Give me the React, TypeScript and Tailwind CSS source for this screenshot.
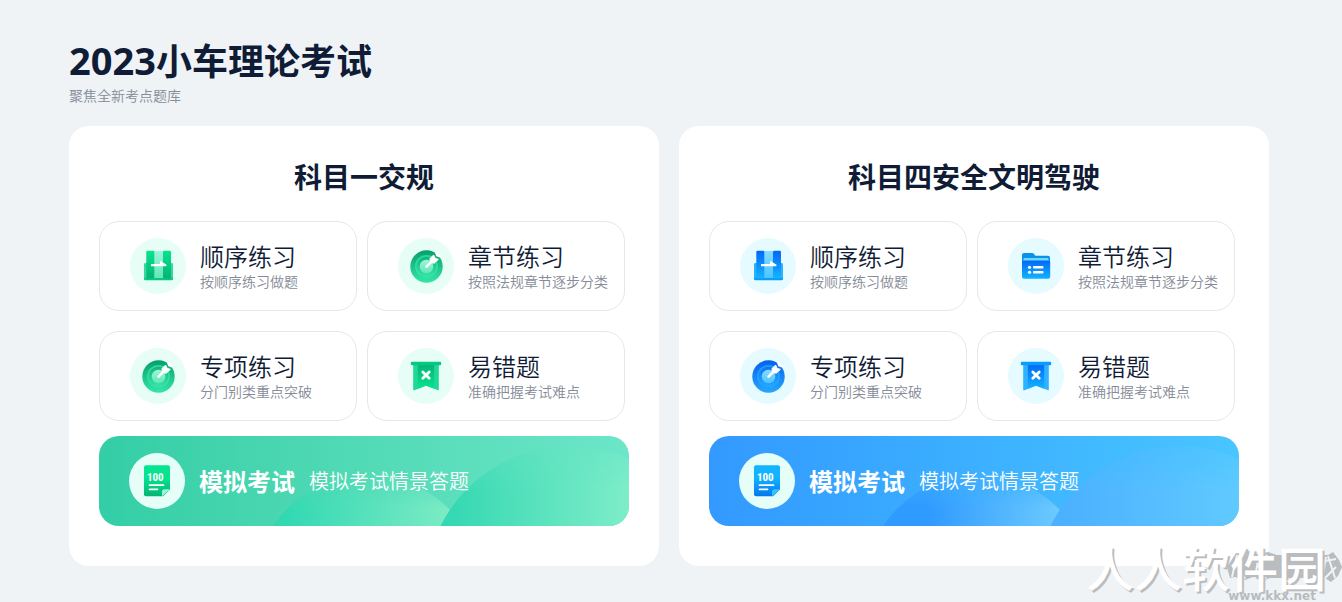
import { useId } from "react";

type Tone = "green" | "blue";
type IconKind = "book" | "target" | "folder" | "flag";

const palette = {
  green: { light: "#06e48f", dark: "#05b374", base: "#04c884", pale: "#9df6dc", pale2: "#62e6b6", deep: "#069f69", bright: "#35e6a8" },
  blue: { light: "#12b4ff", dark: "#0468f5", base: "#0a9bff", pale: "#86dcff", pale2: "#4cc4ff", deep: "#0560ee", bright: "#25a8ff" },
};

function Icon({ kind, tone }: { kind: IconKind; tone: Tone }) {
  const id = useId();
  const c = palette[tone];
  const v = `${id}v`;
  const r = `${id}r`;
  const p = `${id}p`;
  const f = `${id}f`;
  const halo = tone === "green" ? "#e6fef6" : "#e6fbff";
  const book = tone === "green" ? [c.light, c.dark] : [c.dark, c.light];
  return (
    <svg viewBox="0 0 56 56" className="size-14 shrink-0" aria-hidden="true">
      <defs>
        <linearGradient id={v} x1="0" y1="0" x2="0" y2="1">
          <stop offset="0" stopColor={book[0]} />
          <stop offset="1" stopColor={book[1]} />
        </linearGradient>
        <linearGradient id={r} x1="0" y1="0" x2="0" y2="1">
          <stop offset="0" stopColor={c.deep} />
          <stop offset="1" stopColor={c.bright} />
        </linearGradient>
        <linearGradient id={p} x1="0" y1="0" x2="0" y2="1">
          <stop offset="0" stopColor={c.pale} />
          <stop offset="1" stopColor={c.pale2} />
        </linearGradient>
        <linearGradient id={f} x1="0" y1="0" x2="0" y2="1">
          <stop offset="0" stopColor={c.dark} />
          <stop offset="1" stopColor={c.light} />
        </linearGradient>
      </defs>
      <circle cx="28" cy="28" r="28" fill={halo} />
      {kind === "book" && (
        <>
          <rect x="14" y="25" width="29" height="17.3" rx="1.5" fill={c.base} />
          <rect x="14" y="25" width="29" height="15" rx="1.5" fill={c.pale2} opacity=".55" />
          <rect x="24" y="13" width="9" height="27" fill={`url(#${p})`} />
          <rect x="16.3" y="12.8" width="8" height="27.4" rx="1.3" fill={`url(#${v})`} />
          <rect x="33" y="12.8" width="8" height="27.4" rx="1.3" fill={`url(#${v})`} />
          <path d="M21 26.1h9v-3.4l6.2 3.8c.7.5.5 1.7-.4 1.7H21z" fill="#fff" />
        </>
      )}
      {kind === "target" && (
        <>
          <circle cx="28.5" cy="28.5" r="16.2" fill={`url(#${r})`} />
          <circle cx="28.5" cy="28.5" r="11.5" fill={c.bright} opacity=".75" />
          <circle cx="28.5" cy="28.5" r="9.8" fill={`url(#${r})`} opacity=".65" />
          <circle cx="28.5" cy="28.5" r="6.8" fill={`url(#${p})`} />
          <path d="M28.5 28.7l6-6" stroke="#fff" strokeWidth="2.6" strokeLinecap="round" />
          <path d="M32 20.6l3.6-3.6 1.4 3.2 3.4 1.2-4.2 3.8-3.8-.6z" fill="#fff" stroke="#fff" strokeWidth="1" strokeLinejoin="round" />
          <path d="M37 15l2.4-1.6.9 2.6 2.9 1.3-1.5 2.2-3.4-1.3z" fill="#fff" />
        </>
      )}
      {kind === "folder" && (
        <>
          <path d="M14 17q0-2 2-2h8.2q1 0 1.6.8l1.6 2H40q2 0 2 2v9H14z" fill="#0b91e8" />
          <rect x="15.5" y="20" width="25" height="5" rx="1" fill="#68d9fb" />
          <rect x="14" y="22.5" width="28.2" height="18.3" rx="2" fill={`url(#${v})`} />
          <g fill="#fff">
            <circle cx="21.5" cy="29.3" r="1.6" />
            <circle cx="21.5" cy="34.3" r="1.6" />
            <rect x="25" y="28" width="10.5" height="2.5" rx="1" />
            <rect x="25" y="33" width="10.5" height="2.5" rx="1" />
          </g>
        </>
      )}
      {kind === "flag" && (
        <>
          <path d="M15.2 16h25.6v25.4q0 1.3-1.2.7L28 37.8l-11.6 4.4q-1.2.5-1.2-.8z" fill={tone === "green" ? "#1fd896" : "#2fb2ff"} />
          <path d="M19.8 16h16.4v24.8L28 37.6l-8.2 3.2z" fill={`url(#${f})`} />
          <rect x="12.8" y="13.8" width="30.4" height="3.4" rx="1.2" fill={c.base} />
          <path d="M24.8 23.9l6.4 6.4M31.2 23.9l-6.4 6.4" stroke="#fff" strokeWidth="2.8" strokeLinecap="round" />
        </>
      )}
    </svg>
  );
}

function ExamIcon({ tone }: { tone: Tone }) {
  const id = useId();
  const c = palette[tone];
  return (
    <svg viewBox="0 0 56 56" className="size-14 shrink-0" aria-hidden="true">
      <defs>
        <linearGradient id={id} x1="0" y1="0" x2="0" y2="1">
          <stop offset="0" stopColor={c.light} />
          <stop offset=".4" stopColor={c.light} />
          <stop offset="1" stopColor={tone === "green" ? c.dark : "#0478ee"} />
        </linearGradient>
      </defs>
      <circle cx="28" cy="28" r="28" fill="#e6fef8" />
      <path d="M17 12.3h22q2 0 2 2v22.3l-7 6.6H17q-2 0-2-2V14.3q0-2 2-2z" fill={`url(#${id})`} />
      <path d="M33 43.2v-4.3q0-2.6 2.6-2.6H41z" fill={tone === "green" ? c.pale : "#35c2ff"} />
      <text x="18" y="28" fontFamily="'Liberation Sans Narrow', 'Roboto Condensed', Roboto, sans-serif" fontSize="11" fontWeight="700" fill="#fff">100</text>
      <path d="M20.5 32.2h14M20.5 36.3h8" stroke="#fff" strokeWidth="1.7" strokeLinecap="round" />
    </svg>
  );
}

const banners = {
  green: { bg: "bg-linear-to-r from-[#32cea5] to-[#6be6c8]", a: ["#31d8b2", "#7cebc5"], b: ["#34d8b3", "#7eedc8"] },
  blue: { bg: "bg-linear-to-r from-[#3399ff] via-[#3cb0ff] to-[#49c5ff]", a: ["#2f9aff", "#6ccaff"], b: ["#4bb0ff", "#60caff"] },
};

function ExamBanner({ tone }: { tone: Tone }) {
  const id = useId();
  const b = banners[tone];
  return (
    <button type="button" className={`relative mt-[15px] flex h-[90px] w-full items-center overflow-hidden rounded-[20px] pl-[30px] text-left text-white ${b.bg}`}>
      <svg viewBox="0 0 530 90" preserveAspectRatio="xMaxYMax slice" className="absolute inset-0 size-full" aria-hidden="true">
        <defs>
          <linearGradient id={`${id}a`} gradientUnits="userSpaceOnUse" x1="185" y1="0" x2="350" y2="0">
            <stop offset={tone === "green" ? "0" : ".2"} stopColor={b.a[0]} />
            <stop offset="1" stopColor={b.a[1]} />
          </linearGradient>
          <linearGradient id={`${id}b`} gradientUnits="userSpaceOnUse" x1="350" y1="0" x2="530" y2="0">
            <stop offset="0" stopColor={b.b[0]} />
            <stop offset="1" stopColor={b.b[1]} />
          </linearGradient>
          <linearGradient id={`${id}f`} gradientUnits="userSpaceOnUse" x1="0" y1="40" x2="0" y2="72">
            <stop offset="0" stopColor="#fff" stopOpacity=".1" />
            <stop offset="1" stopColor="#fff" />
          </linearGradient>
          <linearGradient id={`${id}g`} gradientUnits="userSpaceOnUse" x1="0" y1="8" x2="0" y2="55">
            <stop offset="0" stopColor="#fff" stopOpacity=".3" />
            <stop offset="1" stopColor="#fff" />
          </linearGradient>
          <mask id={`${id}m`} maskUnits="userSpaceOnUse" x="0" y="0" width="530" height="90">
            <rect width="530" height="90" fill={`url(#${id}f)`} />
          </mask>
          <mask id={`${id}n`} maskUnits="userSpaceOnUse" x="0" y="0" width="530" height="90">
            <rect width="530" height="90" fill={`url(#${id}g)`} />
          </mask>
        </defs>
        <circle cx="269" cy="153" r="114" fill={`url(#${id}a)`} mask={`url(#${id}m)`} />
        <circle cx="471" cy="155" r="145" fill={`url(#${id}b)`} mask={`url(#${id}n)`} />
      </svg>
      <span className="relative flex items-center gap-[14px]">
        <ExamIcon tone={tone} />
        <span className="text-[24px] leading-8 font-bold">模拟考试</span>
        <span className="text-[20px] leading-8 font-[350]">模拟考试情景答题</span>
      </span>
    </button>
  );
}

interface Practice {
  icon: IconKind;
  title: string;
  note: string;
}

function PracticeCard({ item, tone }: { item: Practice; tone: Tone }) {
  return (
    <button type="button" className="flex h-[90px] items-center gap-[14px] rounded-[20px] border border-[#e4e7ea] bg-white pl-[30px] text-left">
      <Icon kind={item.icon} tone={tone} />
      <span className="flex flex-col pb-[3px] whitespace-nowrap">
        <span className="text-[24px] leading-8 font-[350] text-[#101c36]">{item.title}</span>
        <span className="text-[14px] leading-[18px] font-[350] text-[#858b98]">{item.note}</span>
      </span>
    </button>
  );
}

function Subject({ title, tone, items }: { title: string; tone: Tone; items: Practice[] }) {
  return (
    <section className="rounded-[20px] bg-white px-[30px] pt-7 pb-10">
      <h2 className="mb-[23px] text-center text-[28px] leading-[44px] font-bold">{title}</h2>
      <div className="grid grid-cols-2 gap-x-[10px] gap-y-5 pr-1">
        {items.map((item) => (
          <PracticeCard key={item.title} item={item} tone={tone} />
        ))}
      </div>
      <ExamBanner tone={tone} />
    </section>
  );
}

const practices = (second: IconKind): Practice[] => [
  { icon: "book", title: "顺序练习", note: "按顺序练习做题" },
  { icon: second, title: "章节练习", note: "按照法规章节逐步分类" },
  { icon: "target", title: "专项练习", note: "分门别类重点突破" },
  { icon: "flag", title: "易错题", note: "准确把握考试难点" },
];

function Watermark() {
  return (
    <div className="pointer-events-none absolute right-0 bottom-0 flex w-[256px] flex-col whitespace-nowrap">
      <svg viewBox="0 0 120 34" className="absolute top-[8px] right-0 h-[34px] w-[120px]" aria-hidden="true">
        <path d="M5 17L14 3l8 1 5-3 9 3 10-2 9 3h51l5-3 6 8 3 7-4 9-7 6-6-4H48l-8 3-9-4-8 3-10-3-5 1z" fill="#b9bdc0" />
        <path d="M15 5l-5 22M24 4l-9 12 8 13M37 4l-4 24M45 5l-9 11 8 13M104 7l-4 22M98 12l16-3M106 6l7 22M114 17l-12 12" fill="none" stroke="#eff3f6" strokeWidth="2" />
      </svg>
      <span className="relative text-[48px] leading-[48px] font-medium text-white [text-shadow:2px_2px_0_#bcbcbc]">人人软件园</span>
      <span className="relative pr-[26px] text-right font-['DejaVu_Sans'] text-[12px] leading-3 font-bold text-[#b7bbbe]">www.kkx.net</span>
    </div>
  );
}

export default function App() {
  return (
    <div className="relative min-h-screen bg-[#eff3f6] pt-[35px] pr-[73px] pb-9 pl-[69px] font-['Noto_Sans_CJK_SC',sans-serif] text-[#101c36]">
      <header className="mb-[21px]">
        <h1 className="mb-0.5 text-[36px] leading-[48px] font-bold">
          <span className="font-['Noto_Sans'] text-[38px] leading-none">2023</span>小车理论考试
        </h1>
        <p className="text-[14px] leading-5 font-[350] text-[#858b98]">聚焦全新考点题库</p>
      </header>
      <main className="grid grid-cols-2 gap-5">
        <Subject title="科目一交规" tone="green" items={practices("target")} />
        <Subject title="科目四安全文明驾驶" tone="blue" items={practices("folder")} />
      </main>
      <Watermark />
    </div>
  );
}
